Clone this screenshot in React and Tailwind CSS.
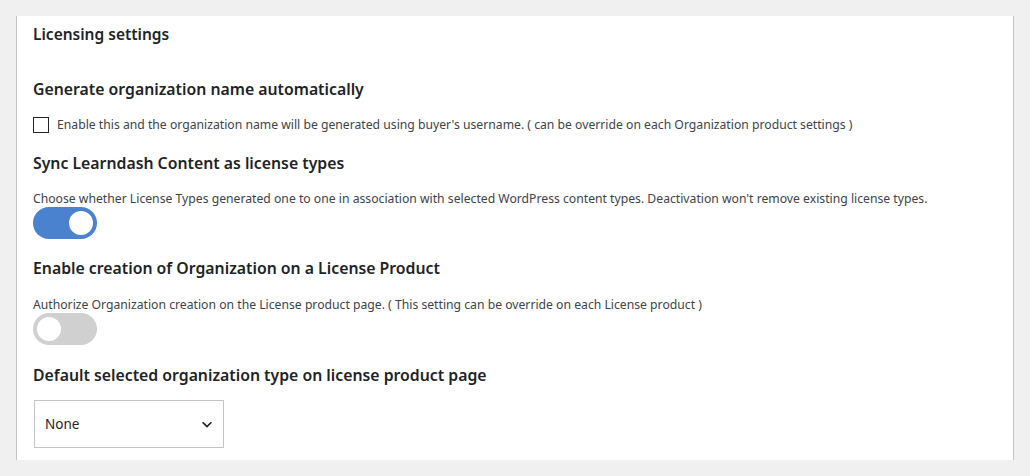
import React from 'react';

const font = { fontFamily: '"Segoe UI", "Noto Sans", sans-serif' };

const Toggle = ({ on }) => (
    <div className={`w-16 h-8 rounded-full flex items-center px-1 ${on ? 'bg-[#4a82d0] justify-end' : 'bg-[#d0d0d0] justify-start'}`}>
        <div className="w-6 h-6 rounded-full bg-white" />
    </div>
);

const Heading = ({ children, className = '' }) => (
    <h3 className={`text-[15.8px] font-semibold text-[#1d2327] leading-6 ${className}`}>{children}</h3>
);

const App = () => {
    return (
        <div className="min-h-[476px] bg-[#f0f0f1] px-4 pt-4 pb-4" style={font}>
            <div className="bg-white border-l border-r border-[#c3c4c7] h-[444px] pl-4 pr-4 pt-[6px]">
                <h2 className="text-[15.5px] font-semibold text-[#1d2327] leading-6">Licensing settings</h2>

                <Heading className="mt-[31px]">Generate organization name automatically</Heading>
                <label className="flex items-center gap-2 mt-[14px]">
                    <span className="w-4 h-4 border border-[#1d2327] bg-white shrink-0" />
                    <span className="text-[12.2px] text-[#3c434a] leading-5">
                        Enable this and the organization name will be generated using buyer's username. ( can be override on each Organization product settings )
                    </span>
                </label>

                <Heading className="mt-[16px]">Sync Learndash Content as license types</Heading>
                <p className="text-[12.2px] text-[#3c434a] leading-4 mt-[16px]">
                    Choose whether License Types generated one to one in association with selected WordPress content types. Deactivation won't remove existing license types.
                </p>
                <Toggle on />

                <Heading className="mt-[17px]">Enable creation of Organization on a License Product</Heading>
                <p className="text-[12.2px] text-[#3c434a] leading-4 mt-[17px]">
                    Authorize Organization creation on the License product page. ( This setting can be override on each License product )
                </p>
                <Toggle />

                <Heading className="mt-[18px]">Default selected organization type on license product page</Heading>
                <div className="mt-[13px] ml-[1px] w-[190px] h-12 border border-[#c3c4c7] flex items-center justify-between pl-[10px] pr-[9px]">
                    <span className="text-[13.5px] text-[#1d2327]">None</span>
                    <svg width="14" height="14" viewBox="0 0 16 16" fill="none" stroke="#1d2327" strokeWidth="2">
                        <path d="M3 6l5 5 5-5" />
                    </svg>
                </div>
            </div>
        </div>
    );
};

export default App;
